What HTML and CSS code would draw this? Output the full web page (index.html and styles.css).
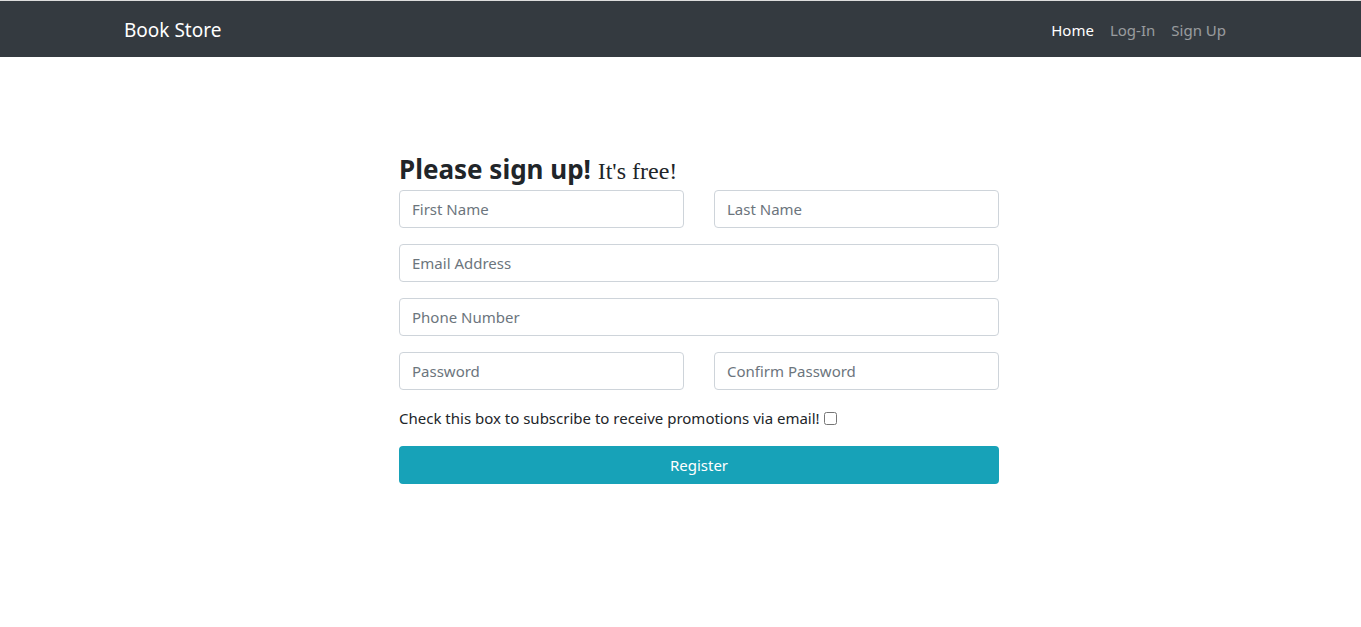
FILE: index.html
```html
<!DOCTYPE html>
<html>
<head>
<meta charset="utf-8">
<title>Book Store</title>
<link rel="stylesheet" href="styles.css">
</head>
<body>
<nav class="navbar">
  <a class="brand" href="#">Book Store</a>
  <ul class="nav">
    <li><a class="nav-link active" href="#">Home</a></li>
    <li><a class="nav-link" href="#">Log-In</a></li>
    <li><a class="nav-link" href="#">Sign Up</a></li>
  </ul>
</nav>
<main class="main">
  <form class="form">
    <h3 class="title">Please sign up! <small class="sub">It's free!</small></h3>
    <div class="row">
      <input class="input" type="text" placeholder="First Name">
      <input class="input" type="text" placeholder="Last Name">
    </div>
    <div class="row">
      <input class="input" type="email" placeholder="Email Address">
    </div>
    <div class="row">
      <input class="input" type="tel" placeholder="Phone Number">
    </div>
    <div class="row">
      <input class="input" type="password" placeholder="Password">
      <input class="input" type="password" placeholder="Confirm Password">
    </div>
    <label class="check">Check this box to subscribe to receive promotions via email! <input type="checkbox" class="cb"></label>
    <button type="button" class="btn">Register</button>
  </form>
</main>
</body>
</html>
```
FILE: styles.css
```css
html, body {
  margin: 0;
  padding: 0;
  background: #fff;
}
body {
  font-family: "Noto Sans", "Open Sans", sans-serif;
  font-size: 15px;
  color: #212529;
  border-top: 1px solid #dcdcdc;
}
.navbar {
  background: #343a40;
  height: 56px;
  display: flex;
  align-items: center;
  justify-content: space-between;
  padding: 1px 135px 0 124px;
  box-sizing: border-box;
}
.brand {
  color: #fff;
  font-size: 19px;
  text-decoration: none;
}
.nav {
  list-style: none;
  margin: 0;
  padding: 0;
  display: flex;
  gap: 16px;
}
.nav-link {
  color: rgba(255,255,255,0.5);
  text-decoration: none;
  font-size: 15px;
}
.nav-link.active {
  color: #fff;
}
.main {
  padding: 97px 0 0 399px;
}
.form {
  width: 600px;
  display: flex;
  flex-direction: column;
  gap: 16px;
}
.title {
  font-size: 26px;
  font-weight: 700;
  line-height: 1.2;
  margin: 0 0 -12px 0;
  color: #212529;
}
.sub {
  font-family: "Liberation Serif", serif;
  font-weight: 400;
  font-size: 24px;
  color: #212529;
}
.row {
  display: flex;
  gap: 30px;
}
.input {
  flex: 1;
  min-width: 0;
  height: 38px;
  box-sizing: border-box;
  border: 1px solid #ced4da;
  border-radius: 4px;
  padding: 6px 12px;
  font-family: inherit;
  font-size: 15px;
  color: #495057;
}
.input::placeholder {
  color: #6c757d;
}
.check {
  font-size: 15px;
  line-height: 24px;
  margin-top: 0;
}
.cb {
  margin: 0;
  width: 13px;
  height: 13px;
  vertical-align: -1px;
}
.btn {
  height: 38px;
  border: none;
  border-radius: 4px;
  background: #17a2b8;
  color: #fff;
  font-family: inherit;
  font-size: 15px;
  margin-top: 0;
}
```
